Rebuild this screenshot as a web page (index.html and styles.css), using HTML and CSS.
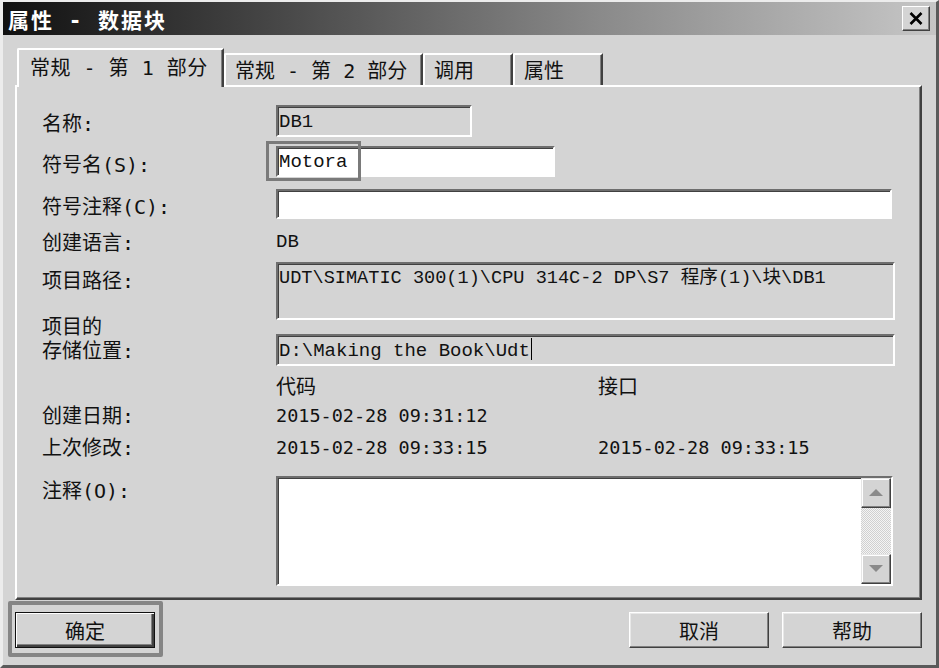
FILE: index.html
```html
<!DOCTYPE html>
<html lang="zh-CN">
<head>
  <meta charset="UTF-8">
  <title>属性 - 数据块</title>
  <link rel="stylesheet" href="styles.css">
</head>
<body>
  <div class="window">
    <div class="titlebar">
      <span class="title">属性 - 数据块</span>
      <button class="close" aria-label="关闭">
        <svg width="14" height="13" viewBox="0 0 14 13">
          <path d="M1.5 1 L12.5 12 M12.5 1 L1.5 12" stroke="#000" stroke-width="2.6" fill="none"/>
        </svg>
      </button>
    </div>

    <div class="tabs">
      <div class="tab active">常规 - 第 1 部分</div>
      <div class="tab tab-wide">常规 - 第 2 部分</div>
      <div class="tab tab-short">调用</div>
      <div class="tab tab-short">属性</div>
    </div>

    <div class="panel">
      <div class="row row-name">
        <span class="label">名称:</span>
        <div class="field readonly w-name">DB1</div>
      </div>

      <div class="row row-symbol">
        <span class="label">符号名(S):</span>
        <div class="field edit w-symbol">Motora<span class="mark"></span></div>
      </div>

      <div class="row row-comment">
        <span class="label">符号注释(C):</span>
        <div class="field edit w-full"></div>
      </div>

      <div class="row row-lang">
        <span class="label">创建语言:</span>
        <span class="plain">DB</span>
      </div>

      <div class="row row-path">
        <span class="label">项目路径:</span>
        <div class="field readonly w-full path">UDT\SIMATIC 300(1)\CPU 314C-2 DP\S7 程序(1)\块\DB1</div>
      </div>

      <div class="row row-storage">
        <span class="label two-lines">项目的<br>存储位置:</span>
        <div class="field readonly w-full">D:\Making the Book\Udt<span class="caret"></span></div>
      </div>

      <div class="row row-head">
        <span class="label"></span>
        <span class="col">代码</span>
        <span class="col">接口</span>
      </div>

      <div class="row row-date">
        <span class="label">创建日期:</span>
        <span class="col date">2015-02-28 09:31:12</span>
      </div>

      <div class="row row-date row-modified">
        <span class="label">上次修改:</span>
        <span class="col date">2015-02-28 09:33:15</span>
        <span class="col date">2015-02-28 09:33:15</span>
      </div>

      <div class="row row-notes">
        <span class="label">注释(O):</span>
        <div class="field memo">
          <div class="memo-text"></div>
          <div class="scrollbar">
            <div class="scroll-btn">
              <svg width="14" height="8" viewBox="0 0 14 8"><polygon points="7,0 14,7 0,7" fill="#8a8a8a"/></svg>
            </div>
            <div class="scroll-track"></div>
            <div class="scroll-btn">
              <svg width="14" height="8" viewBox="0 0 14 8"><polygon points="0,0 14,0 7,7" fill="#8a8a8a"/></svg>
            </div>
          </div>
        </div>
      </div>
    </div>

    <div class="buttons">
      <div class="focus-frame">
        <button class="btn default">确定</button>
      </div>
      <span class="spacer"></span>
      <button class="btn">取消</button>
      <button class="btn">帮助</button>
    </div>
  </div>
</body>
</html>
```

FILE: styles.css
```css
/* Reset */
* {
  box-sizing: border-box;
  margin: 0;
  padding: 0;
}

body {
  font-family: "DejaVu Sans Mono", "Noto Sans CJK SC", sans-serif;
  font-size: 20px;
  color: #111;
  background: #d4d4d4;
}

.window {
  width: 939px;
  height: 668px;
  background: #d4d4d4;
  border-top: 2px solid #ececec;
  border-left: 3px solid #ececec;
  border-right: 3px solid #5a5a5a;
  border-bottom: 3px solid #5a5a5a;
  display: flex;
  flex-direction: column;
}

/* Title bar */
.titlebar {
  height: 33px;
  display: flex;
  align-items: center;
  padding: 0 6px 0 5px;
  background: linear-gradient(to right, #101010 0%, #4c4c4c 32%, #8a8a8a 64%, #c6c6c6 100%);
}

.title {
  color: #fff;
  font-weight: bold;
  font-size: 21px;
  letter-spacing: 2px;
  flex: 1;
}

.close {
  width: 28px;
  height: 25px;
  display: flex;
  align-items: center;
  justify-content: center;
  background: #d4d4d4;
  border: 1px solid;
  border-color: #fff #404040 #404040 #fff;
  box-shadow: inset -1px -1px 0 #808080;
}

/* Tabs */
.tabs {
  display: flex;
  align-items: flex-end;
  height: 37px;
  margin-top: 13px;
  padding-left: 14px;
  position: relative;
  z-index: 1;
}

.tab {
  height: 32px;
  padding: 3px 0 0 9px;
  line-height: 26px;
  border-top: 2px solid #fff;
  border-left: 2px solid #fff;
  border-right: 2px solid #404040;
  box-shadow: inset -1px 0 0 #808080;
  border-top-left-radius: 2px;
  white-space: nowrap;
  background: #d4d4d4;
}

.tab.active {
  width: 207px;
  height: 39px;
  margin-bottom: -2px;
  padding: 5px 0 0 11px;
  letter-spacing: 0.5px;
}

.tab-wide {
  width: 199px;
}

.tab-short {
  width: 90px;
}

/* Panel */
.panel {
  width: 907px;
  height: 515px;
  margin-left: 12px;
  padding-left: 25px;
  border: 2px solid;
  border-color: #fff #404040 #404040 #fff;
  box-shadow: inset -1px -1px 0 #808080;
  display: flex;
  flex-direction: column;
}

.row {
  display: flex;
  align-items: center;
}

.label {
  width: 234px;
  flex-shrink: 0;
  line-height: 24px;
  padding-top: 2px;
}

.row-name .label,
.row-symbol .label,
.row-comment .label,
.row-lang .label {
  padding-top: 6px;
}

.row-name { margin-top: 18px; height: 32px; }
.row-symbol { margin-top: 9px; height: 31px; }
.row-comment { margin-top: 12px; height: 30px; }
.row-lang { margin-top: 8px; height: 26px; }

.row-path {
  margin-top: 9px;
  align-items: flex-start;
}
.row-path .label { margin-top: 5px; }

.row-storage {
  margin-top: 14px;
  align-items: flex-start;
}
.row-storage .label.two-lines {
  margin-top: -21px;
  line-height: 24px;
}

.row-head { margin-top: 6px; height: 26px; }
.row-date { margin-top: 4px; height: 26px; }
.row-modified { margin-top: 6px; }

.row-notes {
  margin-top: 16px;
  align-items: flex-start;
}
.row-notes .label { margin-top: 1px; }

.col {
  width: 324px;
}

.date {
  font-size: 18.5px;
}

.plain {
  font-family: "Liberation Mono", "Noto Sans CJK SC", monospace;
  font-size: 19px;
  padding-top: 4px;
}

/* Sunken fields */
.field {
  position: relative;
  border: 2px solid;
  border-color: #6e6e6e #fff #fff #6e6e6e;
  box-shadow: inset 1px 1px 0 #404040;
  padding-left: 1px;
  font-family: "Liberation Mono", "Noto Sans CJK SC", monospace;
  font-size: 19px;
  white-space: nowrap;
}

.readonly { background: #d4d4d4; }
.edit { background: #fff; }

.w-name { width: 196px; height: 32px; line-height: 31px; }
.w-symbol { width: 279px; height: 31px; line-height: 29px; }
.row-comment .w-full { width: 616px; height: 30px; }

.row-path .w-full,
.row-storage .w-full {
  width: 619px;
}

.path {
  height: 58px;
  padding-top: 3px;
  line-height: 24px;
  font-size: 18.6px;
}

.row-storage .field {
  height: 32px;
  line-height: 30px;
}

/* annotation frame drawn over the symbol name */
.mark {
  position: absolute;
  left: -12px;
  top: -7px;
  width: 95px;
  height: 40px;
  border: 3px solid #7a7a7a;
}

.caret {
  display: inline-block;
  width: 1px;
  height: 22px;
  margin-left: 1px;
  background: #000;
  vertical-align: -4px;
}

/* Multi-line comment box */
.memo {
  width: 617px;
  height: 110px;
  background: #fff;
  display: flex;
}

.memo-text {
  flex: 1;
}

.scrollbar {
  width: 30px;
  display: flex;
  flex-direction: column;
}

.scroll-btn {
  height: 30px;
  display: flex;
  align-items: center;
  justify-content: center;
  background: #d4d4d4;
  border: 1px solid;
  border-color: #e6e6e6 #404040 #404040 #e6e6e6;
  box-shadow: inset -1px -1px 0 #808080, inset 1px 1px 0 #fff;
}

.scroll-track {
  flex: 1;
  background-color: #e4e4e4;
  background-image: repeating-conic-gradient(#d0d0d0 0 25%, #f4f4f4 0 50%);
  background-size: 2px 2px;
}

/* Bottom buttons */
.buttons {
  display: flex;
  align-items: flex-start;
  padding: 0 14px 0 5px;
}

.spacer {
  flex: 1;
}

.focus-frame {
  margin-top: 1px;
  padding: 7px 4px 5px 3px;
  border: 4px solid #858585;
  border-radius: 2px;
}

.btn {
  width: 140px;
  height: 36px;
  margin-top: 12px;
  margin-left: 13px;
  font-family: "Noto Sans CJK SC", sans-serif;
  font-size: 20px;
  color: #111;
  background: #d4d4d4;
  border: 1px solid;
  border-color: #fff #404040 #404040 #fff;
  box-shadow: inset -1px -1px 0 #808080, inset 1px 1px 0 #e8e8e8;
}

.btn.default {
  margin: 0;
  border: 1px solid #111;
  box-shadow: inset 1px 1px 0 #fff, inset -2px -2px 0 #404040, inset -3px -3px 0 #808080;
}
```
